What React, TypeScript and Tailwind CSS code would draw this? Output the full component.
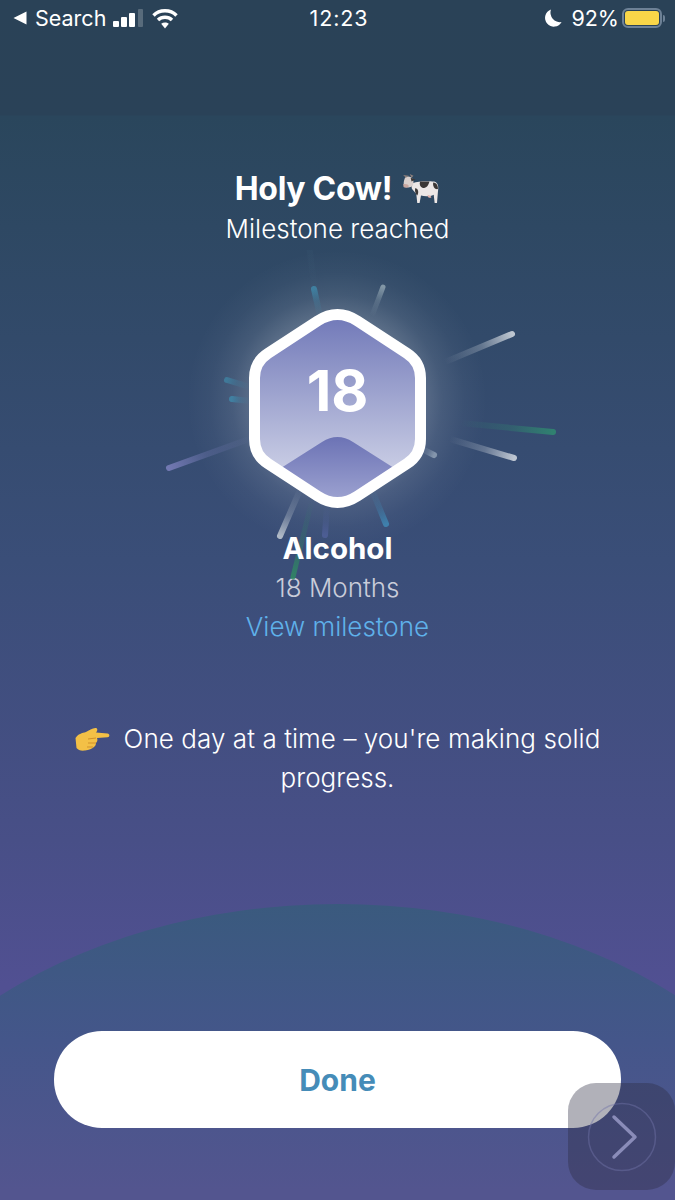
const HEX =
	"M317.5 321 Q337.5 308 357.5 321 L407 353.3 Q420.5 362 420.5 378 L420.5 439 Q420.5 455 407 463.7 L357.5 496 Q337.5 509 317.5 496 L268 463.7 Q254.5 455 254.5 439 L254.5 378 Q254.5 362 268 353.3 Z";

const RAYS = [
	{ id: "r1", x1: 320, y1: 316, x2: 314, y2: 289, color: "#3f86a8", width: 6 },
	{ id: "r2", x1: 372, y1: 316, x2: 383, y2: 287, color: "#8fa3b0", width: 5 },
	{ id: "r3", x1: 445, y1: 362, x2: 512, y2: 334, color: "#d5dbe2", width: 6 },
	{ id: "r4", x1: 460, y1: 423, x2: 553, y2: 432, color: "#2f8a70", width: 6 },
	{ id: "r5", x1: 450, y1: 439, x2: 514, y2: 458, color: "#d5dbe2", width: 6 },
	{ id: "r6", x1: 420, y1: 448, x2: 434, y2: 455, color: "#8fa0b5", width: 6 },
	{ id: "r7", x1: 372, y1: 490, x2: 386, y2: 524, color: "#3f88b5", width: 6 },
	{ id: "r8", x1: 300, y1: 490, x2: 280, y2: 536, color: "#c3cbd3", width: 6 },
	{ id: "r9", x1: 327, y1: 505, x2: 325, y2: 535, color: "#4f5f98", width: 6 },
	{ id: "r10", x1: 312, y1: 500, x2: 293, y2: 577, color: "#2f8a62", width: 5 },
	{ id: "r11", x1: 252, y1: 438, x2: 169, y2: 468, color: "#7c80bd", width: 6 },
	{ id: "r12", x1: 250, y1: 387, x2: 227, y2: 380, color: "#3f7f9f", width: 6 },
	{ id: "r13", x1: 250, y1: 401, x2: 232, y2: 399, color: "#3f86a8", width: 6 },
	{ id: "r14", x1: 316, y1: 300, x2: 304, y2: 205, color: "#4a6f88", width: 6 },
];

function StatusBar() {
	return (
		<div className="flex h-[36px] items-center justify-between pl-[13px] pr-[10px] text-[21.5px] text-white">
			<div className="flex w-[200px] items-center">
				<svg width="14" height="14" viewBox="0 0 14 14" className="mr-[8px]">
					<path d="M13.5 0.5 V13.5 L0.5 7 Z" fill="#fff" />
				</svg>
				<span>Search</span>
				<svg width="31" height="20" viewBox="0 0 31 20" className="ml-[7px] mt-[-1px]">
					<rect x="0" y="13" width="6" height="6" rx="1" fill="#fff" />
					<rect x="8" y="9" width="6" height="10" rx="1" fill="#fff" />
					<rect x="16" y="5" width="6" height="14" rx="1" fill="#fff" />
					<rect x="25" y="1" width="5" height="18" rx="1" fill="#fff" fillOpacity="0.22" />
				</svg>
				<svg width="26" height="21" viewBox="0 0 26 21" className="ml-[8px]" fill="none" stroke="#fff" strokeWidth="3.4">
					<path d="M1.5 7.5 C7.5 1.2 18.5 1.2 24.5 7.5" />
					<path d="M6 12 C9.8 8.3 16.2 8.3 20 12" />
					<path d="M13 20.5 L9.2 15.8 C11.4 14 14.6 14 16.8 15.8 Z" fill="#fff" stroke="none" />
				</svg>
			</div>
			<span className="tracking-[0.9px]">12:23</span>
			<div className="flex w-[200px] items-center justify-end">
				<svg width="18" height="18" viewBox="0 0 18 18" className="mr-[9px]">
					<path d="M7 0.5 A8.8 8.8 0 1 0 17.6 13 A9.5 9.5 0 0 1 7 0.5 Z" fill="#fff" />
				</svg>
				<span>92%</span>
				<div className="ml-[3px] flex h-[20px] w-[40px] items-center rounded-[6px] border-[2px] border-[#6d8196] p-[1px]">
					<div className="h-full w-full rounded-[3px] bg-[#f9d648]" />
				</div>
				<div className="ml-[1px] h-[7px] w-[2px] rounded-r bg-[#6d8196]" />
			</div>
		</div>
	);
}

function CowEmoji() {
	return (
		<svg width="38" height="32" viewBox="0 0 40 34">
			<path d="M11 11 C18 8 28 9 34 9 C38 10 39 14 38 20 L37 32 H34.5 L33.5 23 C30 25 24 25 20 24 L18.5 32 H16 L15 22 C13 20 11 18 10 16 Z" fill="#ece7e6" />
			<path d="M3 5 C5 3 9 3 11 6 C13 9 12 14 9 15 C6 16 3 15 2 13 C1 11 2 8 3 5 Z" fill="#d9cfcc" />
			<path d="M1 12 C3 11 7 12 7 14 C6 16 3 16 1.5 15 Z" fill="#c9a7a0" />
			<path d="M1 2 L4 5 L7 3 Z M8 1 L10 5 L12 3 Z" fill="#8d7f7b" />
			<path d="M9 5 L14 7 L10 9 Z" fill="#3b3736" />
			<path d="M19 9 H29 C28 13 26 16 22 16 C19 15 18 12 19 9 Z" fill="#3b3736" />
			<path d="M33 10 C37 10 38 14 38 17 C35 18 32 14 33 10 Z" fill="#3b3736" />
			<path d="M14 16 C17 17 18 20 16 24 C14 22 13 19 14 16 Z" fill="#3b3736" />
			<path d="M27 23 C29 24 31 24 31 26 C29 27 27 26 27 23 Z" fill="#e5b4ad" />
		</svg>
	);
}

function HandEmoji() {
	return (
		<svg width="35" height="24" viewBox="0 0 35 24">
			<path d="M0.5 11 C3 7 7 6 11 5 C14 3.5 18 0.5 21 1 C23 1.5 22.5 4 21 5.5 L32.5 6.5 C35 7 35 10 32.5 10.3 L22 11 C23 13 22 15 21 16 C21 18 20 19 19 20 C17 22 14 23 10 23.5 C6 24 3 23 1.5 21 Z" fill="#f3c046" />
			<path d="M13 12 L21 11 M13 16 L21 16 M12 20 L18 20" stroke="#d0912a" strokeWidth="1" fill="none" />
		</svg>
	);
}

function Badge() {
	return (
		<div className="relative h-[197px] w-[177px]">
			{/* svg uses page coordinates, badge box starts at 249,310 */}
			<svg width="675" height="400" viewBox="0 250 675 400" className="absolute left-[-249px] top-[-60px]" fill="none">
				<defs>
					<radialGradient id="glow" gradientUnits="userSpaceOnUse" cx="337" cy="400" r="150">
						<stop offset="0.55" stopColor="#fff" stopOpacity="0.2" />
						<stop offset="0.7" stopColor="#fff" stopOpacity="0.09" />
						<stop offset="0.85" stopColor="#fff" stopOpacity="0.03" />
						<stop offset="1" stopColor="#fff" stopOpacity="0" />
					</radialGradient>
					<linearGradient id="hexFill" x1="0" y1="0" x2="0" y2="1">
						<stop offset="0" stopColor="#7078b8" />
						<stop offset="1" stopColor="#dcdfee" />
					</linearGradient>
					<linearGradient id="hill" x1="0" y1="0" x2="0" y2="1">
						<stop offset="0" stopColor="#6c73b5" />
						<stop offset="1" stopColor="#acb1d9" />
					</linearGradient>
					<clipPath id="hexClip">
						<path d={HEX} />
					</clipPath>
					{RAYS.map((r) => (
						<linearGradient key={r.id} id={r.id} gradientUnits="userSpaceOnUse" x1={r.x1} y1={r.y1} x2={r.x2} y2={r.y2}>
							<stop offset="0" stopColor={r.color} stopOpacity="0" />
							<stop offset="0.55" stopColor={r.color} stopOpacity={r.id === "r14" ? 0.08 : 0.3} />
							<stop offset="1" stopColor={r.color} stopOpacity={r.id === "r14" ? 0.3 : 0.85} />
						</linearGradient>
					))}
				</defs>
				<circle cx="337" cy="400" r="150" fill="url(#glow)" />
				{RAYS.map((r) => (
					<line key={r.id} x1={r.x1} y1={r.y1} x2={r.x2} y2={r.y2} stroke={`url(#${r.id})`} strokeWidth={r.width} strokeLinecap="round" />
				))}
				<path d={HEX} fill="url(#hexFill)" />
				<g clipPath="url(#hexClip)">
					<path d="M270 475 L322 442 Q337.5 432 353 442 L405 475 V520 H270 Z" fill="url(#hill)" />
				</g>
				<path d={HEX} stroke="#fff" strokeWidth="11" />
			</svg>
			<span className="absolute inset-x-0 top-[49px] text-center text-[57px] font-bold leading-[64px] text-white">18</span>
		</div>
	);
}

export default function App() {
	return (
		<div className="relative h-[1200px] w-[675px] overflow-hidden bg-[linear-gradient(180deg,#2a4257_0px,#2a4258_115px,#2a465c_116px,#3a4e78_560px,#484f87_840px,#515092_985px)] font-['Inter',sans-serif]">
			<div className="pointer-events-none absolute left-[-162px] top-[904px] h-[698px] w-[1000px] rounded-[50%] bg-[linear-gradient(180deg,#3a5a7e_0%,#44568a_19.5%,#53558f_41%)]" />

			<div className="relative flex flex-col items-center">
				<div className="w-full">
					<StatusBar />
				</div>

				<div className="mt-[133px] flex h-[40px] items-center text-[32px] font-bold tracking-[-0.3px] text-white">
					Holy Cow!
					<span className="ml-[10px]">
						<CowEmoji />
					</span>
				</div>
				<p className="h-[40px] text-[26px] font-light leading-[40px] text-white">Milestone reached</p>

				<div className="mt-[61px]">
					<Badge />
				</div>

				<h2 className="relative mt-[21px] h-[40px] text-[29.5px] font-bold leading-[40px] text-white">Alcohol</h2>
				<p className="h-[39px] text-[26px] font-light leading-[39px] text-[#c9ccd9]">18 Months</p>
				<p className="h-[40px] text-[26px] font-light leading-[40px] text-[#5fb1ea]">View milestone</p>

				<div className="mt-[72px] flex h-[39px] items-center text-[26px] font-light tracking-[0.07px] text-white">
					<span className="mr-[14px]">
						<HandEmoji />
					</span>
					One day at a time – you're making solid
				</div>
				<p className="h-[39px] text-[26px] font-light leading-[39px] text-white">progress.</p>

				<button className="mt-[234px] h-[97px] w-[567px] rounded-[48px] bg-white pt-[2px] text-[30px] font-bold text-[#458cb8]">Done</button>
			</div>

			<div className="absolute left-[568px] top-[1083px] flex h-[107px] w-[107px] items-center justify-center rounded-[28px] bg-[#2b2b40]/37">
				<svg width="72" height="72" viewBox="0 0 72 72" fill="none">
					<circle cx="36" cy="36" r="33.5" stroke="#7173a8" strokeOpacity="0.45" strokeWidth="1.5" />
					<path d="M28 16 L49 36 L28 56" stroke="#8a8cb9" strokeWidth="3.5" strokeLinecap="round" strokeLinejoin="round" />
				</svg>
			</div>
		</div>
	);
}
